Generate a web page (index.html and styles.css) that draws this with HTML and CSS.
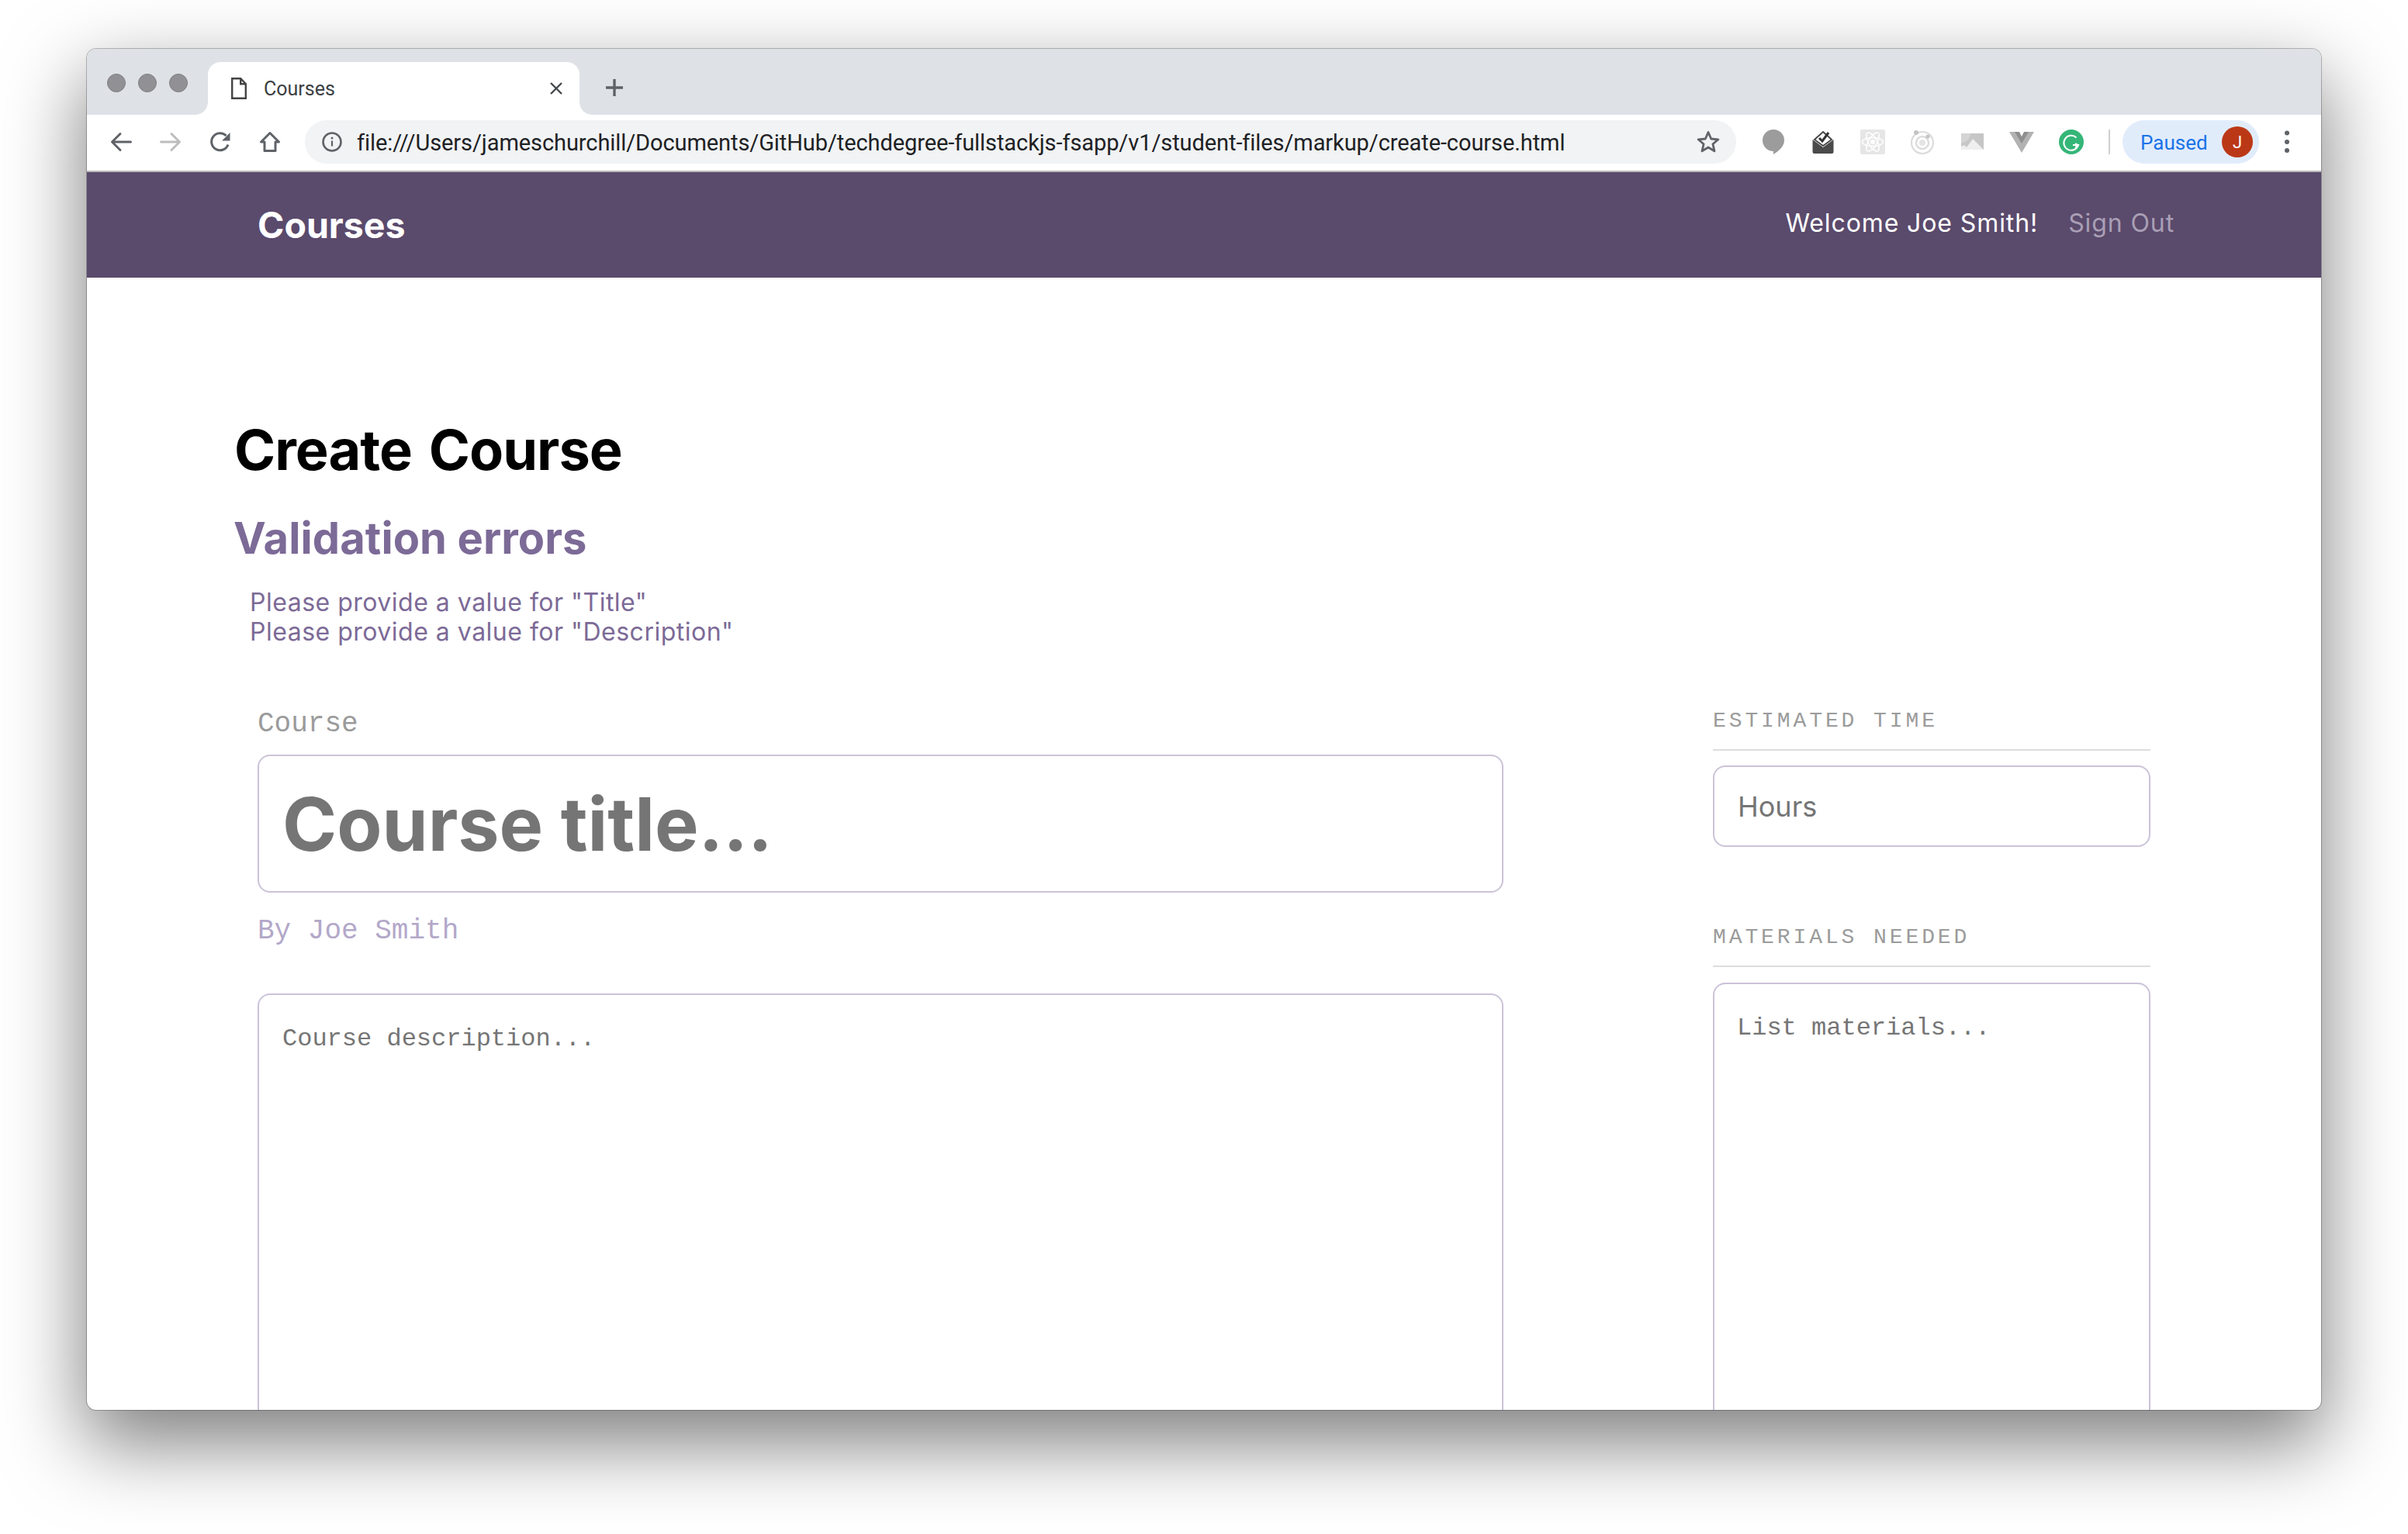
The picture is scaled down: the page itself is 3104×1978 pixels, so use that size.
FILE: index.html
```html
<!DOCTYPE html>
<html lang="en">
<head>
  <meta charset="UTF-8">
  <title>Courses</title>
  <link rel="stylesheet" href="styles.css">
</head>
<body>
  <div class="window">
    <div class="tabstrip">
      <div class="traffic">
        <span class="traffic-dot"></span>
        <span class="traffic-dot"></span>
        <span class="traffic-dot"></span>
      </div>
      <div class="tab">
        <svg class="tab-page" width="20" height="28" viewBox="0 0 20 28"><path d="M1.2 1.2h11l6.6 7v18.6H1.2zM12.2 1.2v7h6.6" fill="none" stroke="#444" stroke-width="2.4"/></svg>
        <span class="tab-title">Courses</span>
        <svg class="tab-close" width="18" height="18" viewBox="0 0 18 18"><path d="M2 2l14 14M16 2L2 16" stroke="#45484d" stroke-width="2.4"/></svg>
      </div>
      <svg class="new-tab" width="28" height="28" viewBox="0 0 28 28"><path d="M14 3v22M3 14h22" stroke="#5f6368" stroke-width="3.4"/></svg>
    </div>

    <div class="toolbar">
      <svg class="tool" width="32" height="32" viewBox="0 0 32 32"><path d="M28.500 16H5M15 5.500 4.500 16 15 26.500" fill="none" stroke="#5f6368" stroke-width="3" stroke-linecap="round" stroke-linejoin="round"/></svg>
      <svg class="tool" width="32" height="32" viewBox="0 0 32 32"><path d="M3.500 16H27M17 5.500 27.500 16 17 26.500" fill="none" stroke="#bdbdbd" stroke-width="3" stroke-linecap="round" stroke-linejoin="round"/></svg>
      <svg class="tool" width="32" height="32" viewBox="0 0 32 32"><path d="M26 19.500A11 11 0 1 1 23.500 8" fill="none" stroke="#5f6368" stroke-width="3"/><path d="M28.500 4v10.500H18z" fill="#5f6368"/></svg>
      <svg class="tool" width="32" height="32" viewBox="0 0 32 32"><path d="M16 4.500 4.500 16H9v11.500h14V16h4.500z" fill="none" stroke="#5f6368" stroke-width="3" stroke-linejoin="round"/></svg>

      <div class="omnibox">
        <svg width="28" height="28" viewBox="0 0 28 28"><circle cx="14" cy="14" r="11.500" fill="none" stroke="#5f6368" stroke-width="2.600"/><path d="M14 12.500v7" stroke="#5f6368" stroke-width="2.200"/><circle cx="14" cy="9" r="1.500" fill="#5f6368"/></svg>
        <span class="url">file:///Users/jameschurchill/Documents/GitHub/techdegree-fullstackjs-fsapp/v1/student-files/markup/create-course.html</span>
        <svg class="star" width="32" height="32" viewBox="0 0 32 32"><path d="M16 3.500l3.700 8.500 9.200.8-7 6 2.100 9-8-4.800-8 4.800 2.100-9-7-6 9.200-.8z" fill="none" stroke="#5f6368" stroke-width="2.800" stroke-linejoin="round"/></svg>
      </div>

      <svg class="ext" width="32" height="32" viewBox="0 0 32 32"><path d="M16 0a14 14 0 0 1 14 14c0 8-7 13.500-14 18v-4A14 14 0 0 1 16 0z" fill="#9c9c9c"/></svg>
      <svg class="ext" width="32" height="32" viewBox="0 0 32 32"><path d="M2.500 13 16 23l13.500-10v16q0 2-2 2h-23q-2 0-2-2z" fill="#4a4a4a"/><path d="M16 3 27 13 16 21 5 13z" fill="#fff" stroke="#4a4a4a" stroke-width="2"/><path d="M11 11l4 4 8-11" fill="none" stroke="#333" stroke-width="3"/></svg>
      <svg class="ext" width="32" height="32" viewBox="0 0 32 32"><rect width="32" height="32" rx="2" fill="#e6e6e6"/><g fill="none" stroke="#fff" stroke-width="1.500"><ellipse cx="16" cy="16" rx="13.500" ry="5.500"/><ellipse cx="16" cy="16" rx="13.500" ry="5.500" transform="rotate(60 16 16)"/><ellipse cx="16" cy="16" rx="13.500" ry="5.500" transform="rotate(120 16 16)"/></g><circle cx="16" cy="16" r="3" fill="#fff"/></svg>
      <svg class="ext" width="32" height="32" viewBox="0 0 32 32"><circle cx="16" cy="17" r="14" fill="none" stroke="#dcdcdc" stroke-width="2.200"/><circle cx="16" cy="17" r="8" fill="none" stroke="#dcdcdc" stroke-width="2.400"/><circle cx="16" cy="17" r="4" fill="#e4e4e4"/><circle cx="8" cy="4" r="3" fill="#c4c4c4"/><circle cx="23" cy="9" r="2.600" fill="#c4c4c4"/></svg>
      <svg class="ext" width="32" height="32" viewBox="0 0 32 32"><rect x="2" y="5" width="29" height="21" fill="#c6c6c6"/><path d="M2 5h12a12 12 0 0 1-12 12z" fill="#d4d4d4"/><path d="M2 26v-4l4-2 3 3 8-11 14 14z" fill="#efefef"/></svg>
      <svg class="ext" width="32" height="32" viewBox="0 0 32 32"><path d="M0 3h8l8 13 8-13h8L16 30z" fill="#b2b2b2"/><path d="M7 3h6l3 6 3-6h6l-9 15z" fill="#8f8f8f"/></svg>
      <svg class="ext" width="32" height="32" viewBox="0 0 32 32"><circle cx="16" cy="16" r="16" fill="#35b678"/><path d="M22.500 10.500A9.500 9.500 0 1 0 25 20h-7" fill="none" stroke="#fff" stroke-width="2"/><path d="M21 18l4 2-4 3" fill="none" stroke="#fff" stroke-width="1.600"/></svg>

      <span class="tool-sep"></span>
      <div class="profile">
        <span class="profile-label">Paused</span>
        <span class="avatar">J</span>
      </div>
      <svg class="menu-dots" width="32" height="32" viewBox="0 0 32 32"><circle cx="16" cy="4.500" r="3" fill="#5f6368"/><circle cx="16" cy="16" r="3" fill="#5f6368"/><circle cx="16" cy="27" r="3" fill="#5f6368"/></svg>
    </div>

    <div class="site-header">
      <h1 class="site-title">Courses</h1>
      <nav class="site-nav">
        <span class="signed-in">Welcome Joe Smith!</span>
        <a class="signout" href="#">Sign Out</a>
      </nav>
    </div>

    <div class="main">
      <h1 class="page-title">Create Course</h1>
      <h2 class="errors-title">Validation errors</h2>
      <ul class="errors">
        <li>Please provide a value for "Title"</li>
        <li>Please provide a value for "Description"</li>
      </ul>

      <div class="form-grid">
        <div class="col-main">
          <p class="course-label">Course</p>
          <div class="field title-field">Course title...</div>
          <p class="byline">By Joe Smith</p>
          <div class="field desc-field">Course description...</div>
        </div>
        <div class="col-side">
          <h4 class="side-label">Estimated Time</h4>
          <div class="field hours-field">Hours</div>
          <h4 class="side-label materials-label">Materials Needed</h4>
          <div class="field materials-field">List materials...</div>
        </div>
      </div>
    </div>
  </div>
</body>
</html>
```

FILE: styles.css
```css
* {
  box-sizing: border-box;
}
body {
  margin: 0;
  height: 1978px;
  overflow: hidden;
  background-color: #fff;
  font-family: Inter, Arial, sans-serif;
}
h1, h2, h4, p, ul {
  margin: 0;
  padding: 0;
}
svg {
  display: block;
  flex: none;
}

/* browser chrome */
.window {
  display: flex;
  flex-direction: column;
  width: 2880px;
  height: 1755px;
  margin: 63px 0 0 112px;
  border-radius: 12px;
  overflow: hidden;
  background-color: #fff;
  box-shadow: 0 0 0 1px rgba(0, 0, 0, 0.25), 0 40px 100px 4px rgba(0, 0, 0, 0.5);
}
.tabstrip {
  display: flex;
  flex: none;
  height: 85px;
  padding-left: 26px;
  background-color: #dee1e6;
}
.traffic {
  display: flex;
  gap: 16px;
  margin-top: 32px;
}
.traffic-dot {
  width: 24px;
  height: 24px;
  border-radius: 50%;
  background-color: #919094;
  border: 1px solid #807f83;
}
.tab {
  position: relative;
  display: flex;
  align-items: center;
  width: 479px;
  height: 68px;
  margin: 17px 0 0 26px;
  padding: 0 21px 0 30px;
  background-color: #fff;
  border-radius: 16px 16px 0 0;
}
.tab::before,
.tab::after {
  content: "";
  position: absolute;
  bottom: 0;
  width: 16px;
  height: 16px;
}
.tab::before {
  left: -16px;
  background: radial-gradient(circle at 0 0, transparent 15.5px, #fff 16px);
}
.tab::after {
  right: -16px;
  background: radial-gradient(circle at 100% 0, transparent 15.5px, #fff 16px);
}
.tab-title {
  margin-left: 22px;
  font-family: Roboto, Arial, sans-serif;
  font-size: 25px;
  color: #3c4043;
}
.tab-close {
  margin-left: auto;
}
.new-tab {
  margin: 36px 0 0 31px;
}
.toolbar {
  display: flex;
  flex: none;
  align-items: center;
  gap: 32px;
  height: 74px;
  padding: 0 0 2px 28px;
  background-color: #fff;
  border-bottom: 2px solid #b9b9b9;
}
.omnibox {
  display: flex;
  align-items: center;
  width: 1845px;
  height: 56px;
  margin-left: -3px;
  padding: 0 20px 0 21px;
  border-radius: 28px;
  background-color: #f1f3f4;
}
.url {
  margin: 2px 0 0 18px;
  font-family: Roboto, Arial, sans-serif;
  font-size: 29px;
  letter-spacing: -0.085px;
  white-space: nowrap;
  color: #202124;
}
.star {
  margin-left: auto;
}
.tool-sep {
  width: 2px;
  height: 32px;
  background-color: #cfcfcf;
}
.profile {
  display: flex;
  align-items: center;
  justify-content: space-between;
  width: 176px;
  height: 56px;
  margin-left: -16px;
  padding: 0 8px 0 23px;
  border-radius: 28px;
  background-color: #e1ecfb;
}
.profile-label {
  margin-top: 2px;
  font-family: Roboto, Arial, sans-serif;
  font-size: 26px;
  color: #1a73e8;
}
.avatar {
  display: flex;
  align-items: center;
  justify-content: center;
  width: 40px;
  height: 40px;
  border-radius: 50%;
  background-color: #bb3817;
  font-family: Roboto, Arial, sans-serif;
  font-size: 22px;
  color: #fff;
}
.menu-dots {
  margin-left: -12px;
}

/* site header */
.site-header {
  display: flex;
  flex: none;
  align-items: center;
  justify-content: space-between;
  height: 136px;
  padding: 0 189px 0 220px;
  background-color: #5a4a6c;
}
.site-title {
  font-size: 46.5px;
  font-weight: 700;
  color: #fff;
}
.site-nav {
  display: flex;
  gap: 39px;
  margin-bottom: 6px;
  font-size: 32px;
  letter-spacing: 0.9px;
}
.signed-in {
  color: #fff;
}
.signout {
  color: #a99fb5;
  text-decoration: none;
}

/* page content */
.main {
  padding: 174px 0 0 190px;
}
.page-title {
  font-size: 72px;
  line-height: 96px;
  font-weight: 700;
  letter-spacing: -1px;
  word-spacing: 6px;
  color: #000;
}
.errors-title {
  margin: 28px 0 0 -1px;
  font-size: 56px;
  line-height: 76px;
  font-weight: 700;
  letter-spacing: 0.1px;
  color: #7c6a97;
}
.errors {
  margin: 26px 0 0 20px;
  list-style: none;
  font-size: 32px;
  line-height: 38px;
  letter-spacing: 0.5px;
  color: #7c6a97;
}
.form-grid {
  display: grid;
  grid-template-columns: 1606px 564px;
  column-gap: 270px;
  margin: 80px 0 0 30px;
}
.course-label {
  font-family: "Liberation Mono", monospace;
  font-size: 36px;
  line-height: 40px;
  color: #9b9b9b;
}
.field {
  border: 2px solid #cbc3d8;
  border-radius: 16px;
  color: #757575;
  background-color: #fff;
}
.title-field {
  display: flex;
  align-items: center;
  height: 178px;
  margin-top: 19px;
  padding-left: 30px;
  font-size: 95px;
  font-weight: 700;
}
.byline {
  margin-top: 30px;
  font-family: "Liberation Mono", monospace;
  font-size: 36px;
  line-height: 40px;
  color: #b3a8c9;
}
.desc-field {
  height: 800px;
  margin-top: 60px;
  padding: 37px 30px;
  font-family: "Liberation Mono", monospace;
  font-size: 32px;
  line-height: 40px;
}
.col-side {
  margin-top: -4px;
}
.side-label {
  padding-bottom: 16px;
  border-bottom: 2px solid #ddd;
  font-family: "Liberation Mono", monospace;
  font-size: 28px;
  line-height: 40px;
  font-weight: 400;
  letter-spacing: 3.9px;
  text-transform: uppercase;
  color: #9b9b9b;
}
.hours-field {
  display: flex;
  align-items: center;
  height: 105px;
  margin-top: 19px;
  padding-left: 30px;
  font-size: 36px;
}
.materials-label {
  margin-top: 97px;
}
.materials-field {
  height: 800px;
  margin-top: 20px;
  padding: 37px 29px;
  font-family: "Liberation Mono", monospace;
  font-size: 32px;
  line-height: 40px;
}
```
